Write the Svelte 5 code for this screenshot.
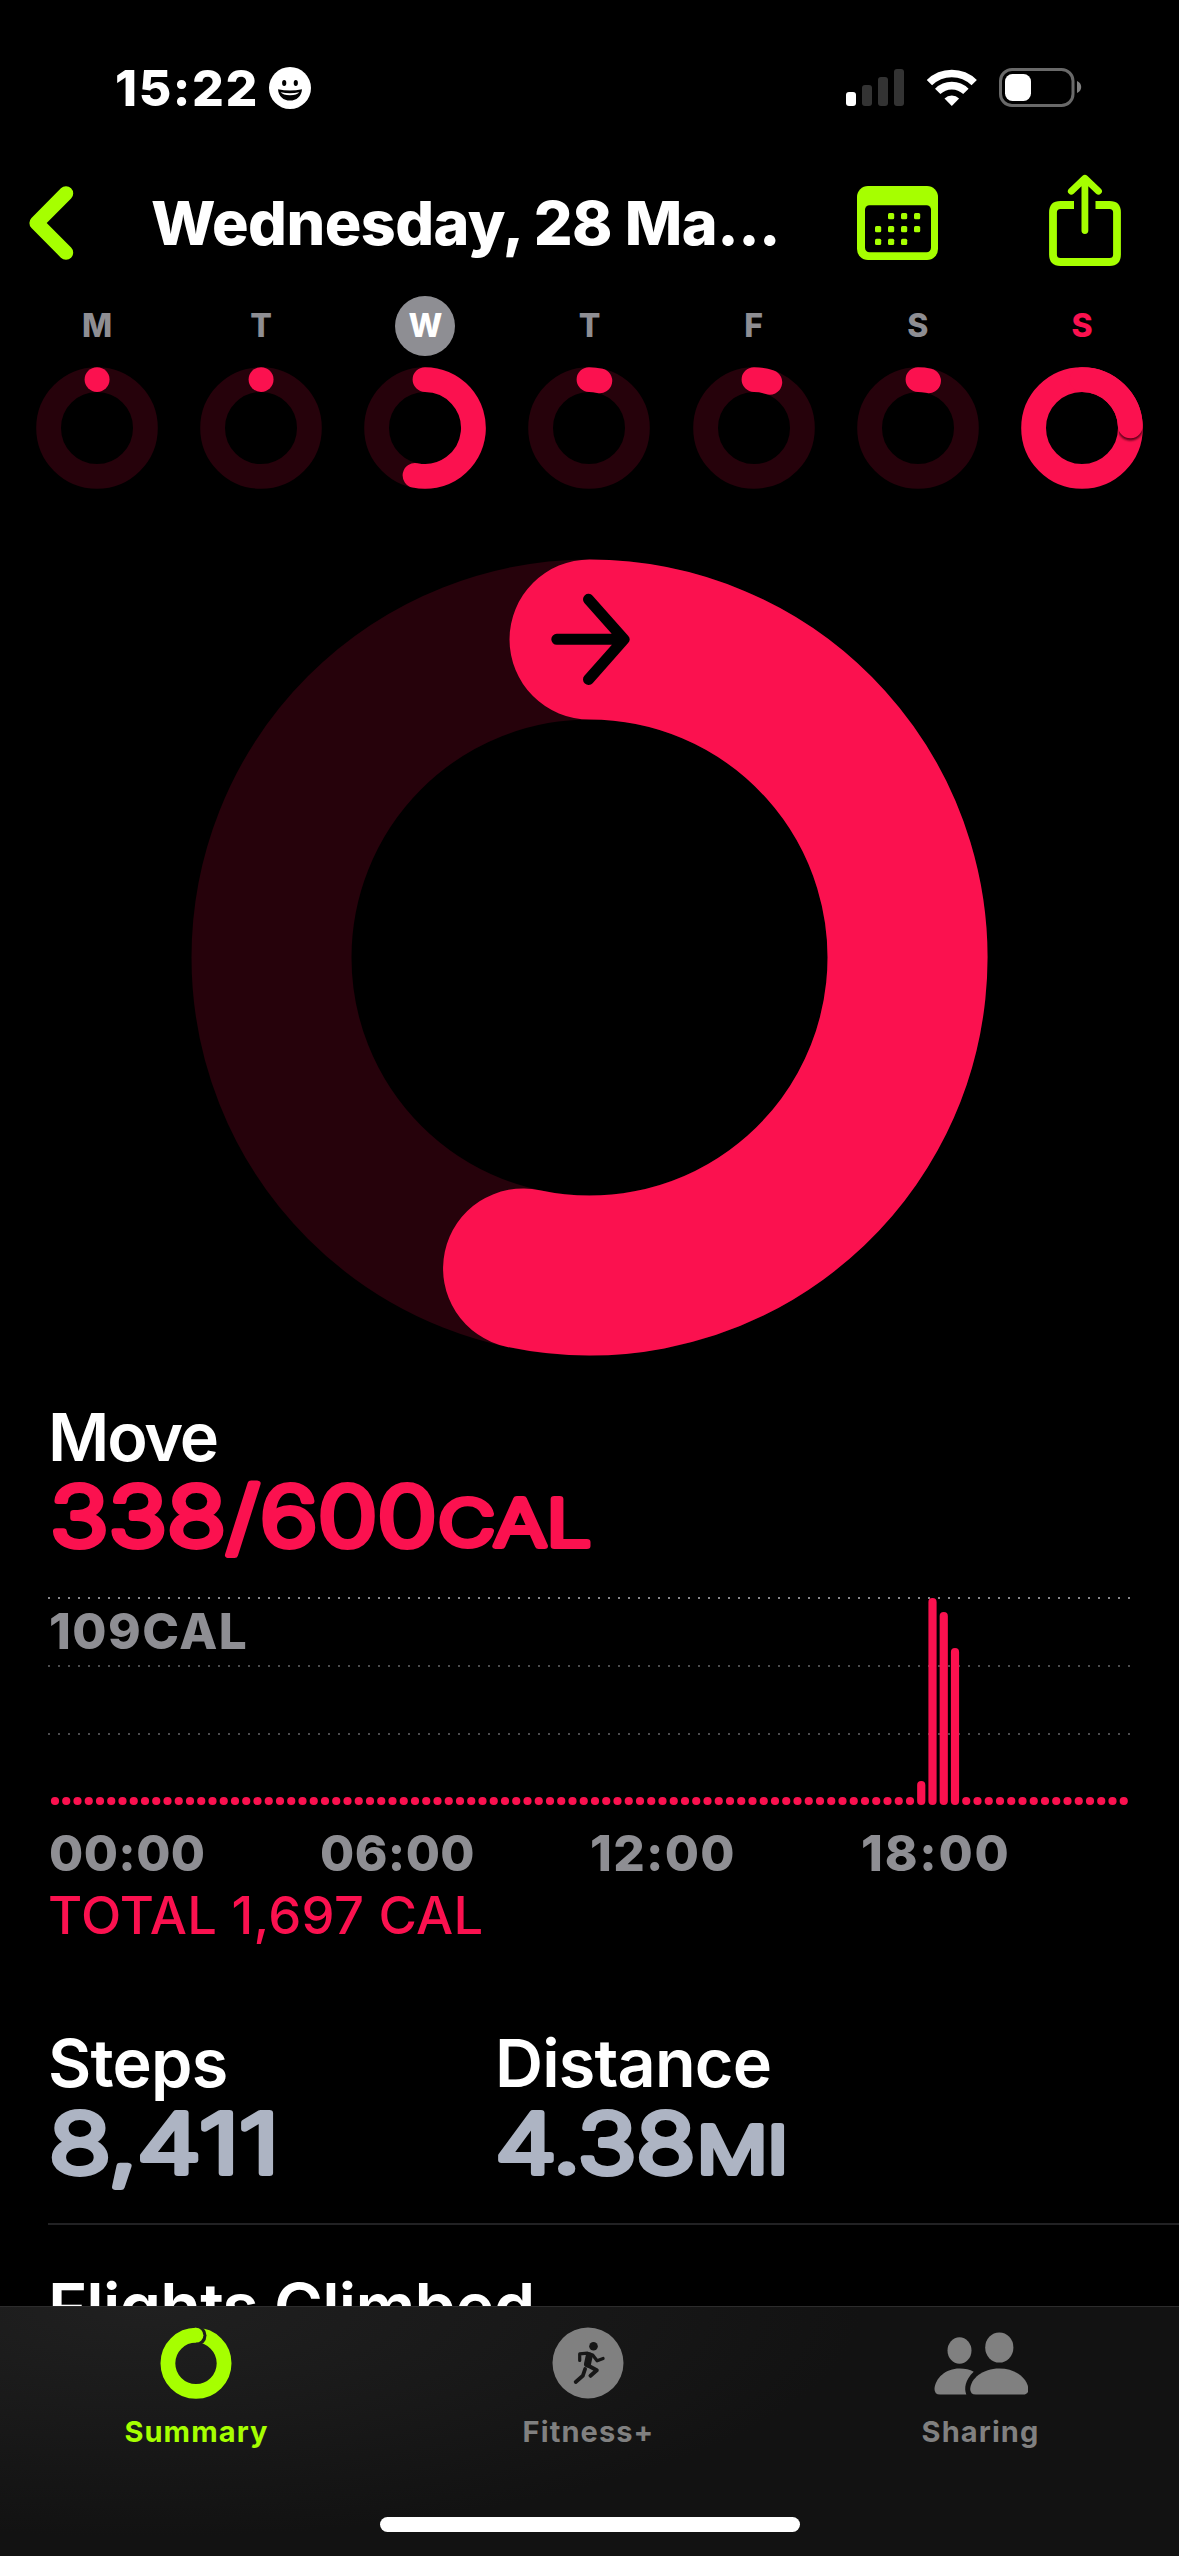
<script>
  const days = [
    { label: 'M', progress: 0.0005 },
    { label: 'T', progress: 0.0005 },
    { label: 'W', progress: 0.533, selected: true },
    { label: 'T', progress: 0.036 },
    { label: 'F', progress: 0.053 },
    { label: 'S', progress: 0.035 },
    { label: 'S', progress: 1.243, today: true }
  ];

  // One entry per quarter hour; the value is the top edge of its bar inside the plot.
  const peaks = { 77: 184, 78: 1, 79: 15, 80: 51 };
  const bars = Array.from({ length: 96 }, (_, i) => {
    const top = peaks[i] ?? 200;
    return { x: 2.9 + i * 11.25, y: top, h: 208 - top };
  });
  const hours = ['00:00', '06:00', '12:00', '18:00'];

  function arc(cx, cy, r, progress) {
    const a = Math.min(progress % 1 || progress, 0.9999) * Math.PI * 2;
    const x = cx + r * Math.sin(a);
    const y = cy - r * Math.cos(a);
    return `M${cx} ${cy - r}A${r} ${r} 0 ${a > Math.PI ? 1 : 0} 1 ${x.toFixed(2)} ${y.toFixed(2)}`;
  }
</script>

<div class="screen">
  <main class="content">
    <div class="status">
      <span class="time">15:22</span>
      <svg class="face" viewBox="0 0 42 42" width="42" height="42">
        <circle cx="21" cy="21" r="21" fill="#fff" />
        <ellipse cx="15.2" cy="16" rx="2.1" ry="2.9" />
        <ellipse cx="26.8" cy="16" rx="2.1" ry="2.9" />
        <path d="M9 22.2Q21 25 33 22.2C32.6 29.3 27.5 33.6 21 33.6S9.400 29.300 9 22.200Z" />
        <path d="M11.700 25.200Q21 27.200 30.300 25.200Q28 28.200 21 28.200T11.700 25.200Z" fill="#fff" />
      </svg>
      <svg class="indicators" viewBox="846 66 236 44" width="236" height="44">
        <rect x="846" y="92" width="10" height="14" rx="3" fill="#fff" />
        <rect x="862" y="85" width="10" height="21" rx="3" fill="#333" />
        <rect x="878" y="77" width="10" height="29" rx="3" fill="#333" />
        <rect x="894" y="69" width="10" height="37" rx="3" fill="#333" />
        <g fill="none" stroke="#fff" stroke-width="7.600">
          <path d="M929.400 82.600A32 32 0 0 1 974.200 82.600" />
          <path d="M937.700 91.400A20 20 0 0 1 965.900 91.400" />
        </g>
        <path d="M951.800 106L944.500 98.600A10.400 10.400 0 0 1 959.100 98.600Z" fill="#fff" />
        <rect x="1000.500" y="69.500" width="72.500" height="36" rx="11.500" fill="none" stroke="#696969" stroke-width="3" />
        <rect x="1005" y="74" width="26" height="27" rx="7.500" fill="#fff" />
        <path d="M1077 81V93C1079.500 92 1081.200 89.800 1081.200 87S1079.500 82 1077 81Z" fill="#808080" />
      </svg>
    </div>

    <header class="nav">
      <svg class="back" viewBox="29 186 45 74" width="45" height="74">
        <path d="M66 193.400L36.600 223L66 252.600" fill="none" stroke="#a6ff00" stroke-width="14.400" stroke-linecap="round" stroke-linejoin="round" />
      </svg>
      <h1>Wednesday, 28 Ma...</h1>
      <svg class="calendar" viewBox="857 186 81 74" width="81" height="74">
        <rect x="857" y="186" width="81" height="74" rx="11" fill="#a6ff00" />
        <rect x="865" y="205.300" width="66" height="47" rx="4.500" fill="#000" />
        <g fill="#a6ff00">
          {#each [[891, 216], [904, 216], [917, 216], [878, 229], [891, 229], [904, 229], [917, 229], [878, 241.700], [891, 241.700], [904, 241.700]] as [x, y]}
            <rect x={x - 3} y={y - 3} width="6.200" height="6.200" rx="1.500" />
          {/each}
        </g>
      </svg>
      <svg class="share" viewBox="1048 174 74 94" width="74" height="94">
        <g fill="none" stroke="#a6ff00">
          <path d="M1074 205H1060.500Q1053 205 1053 212.500V254.500Q1053 262 1060.500 262H1109.500Q1117 262 1117 254.500V212.500Q1117 205 1109.500 205H1095.500" stroke-width="7.800" />
          <path d="M1084.900 179V230.500M1071.300 191.200L1084.900 178.300L1098.500 191.200" stroke-width="6.800" stroke-linecap="round" stroke-linejoin="round" />
        </g>
      </svg>
    </header>

    <section class="week">
      {#each days as day}
        <div class="day">
          <span class="letter" class:selected={day.selected} class:today={day.today}>{day.label}</span>
          <svg viewBox="0 0 122 122" width="122" height="122" fill="none" stroke-width="24.800">
            <circle cx="61" cy="61" r="48.400" stroke={day.progress >= 1 ? '#fb114f' : '#26020b'} />
            {#if day.progress >= 1}
              <defs>
                <filter id="tip" x="-50%" y="-50%" width="200%" height="200%"><feGaussianBlur stdDeviation="1.200" /></filter>
                <clipPath id="band"><path d="M97.600 58H121.500V90H97.600Z" /></clipPath>
              </defs>
              <g clip-path="url(#band)"><circle cx="109.400" cy="60.800" r="12.800" fill="#5c0019" filter="url(#tip)" /></g>
            {/if}
            <path d={arc(61, 61, 48.400, day.progress)} stroke="#fb114f" stroke-linecap="round" />
          </svg>
        </div>
      {/each}
    </section>

    <svg class="move-ring" viewBox="0.500 -0.500 796 796" width="796" height="796" fill="none" stroke-width="160">
      <circle cx="398" cy="398" r="318" stroke="#26020b" />
      <path d={arc(398, 398, 318, 0.5335)} stroke="#fb114f" stroke-linecap="round" />
      <path d="M365.300 79.800H431M397 39.800L432.500 79.800L397 120" stroke="#000" stroke-width="11" stroke-linecap="round" stroke-linejoin="round" />
    </svg>

    <section class="move">
      <h2 class="move-title">Move</h2>
      <svg class="figure pink" viewBox="48 0 600 121" width="600" height="121">
        <text class="big" x="50" y="70" textLength="387" lengthAdjust="spacingAndGlyphs">338/600</text>
        <text class="unit" x="438" y="70" textLength="153" lengthAdjust="spacingAndGlyphs">CAL</text>
      </svg>

      <div class="chart">
        <svg viewBox="0 0 1083 208" width="1083" height="208">
          <g stroke-width="2" stroke-dasharray="2 8">
            <path d="M0 1H1083" stroke="#87878b" />
            <path d="M0 69H1083" stroke="#4c4c4e" />
            <path d="M0 137H1083" stroke="#4c4c4e" />
          </g>
          {#each bars as bar}
            <rect x={bar.x} y={bar.y} width="8.200" height={bar.h} rx="4.100" fill="#fb114f" />
          {/each}
        </svg>
        <span class="peak">109CAL</span>
      </div>
      <div class="axis">
        {#each hours as hour}<span>{hour}</span>{/each}
      </div>
      <p class="total">TOTAL 1,697 CAL</p>
    </section>

    <section class="metrics">
      <div class="metric">
        <h2 class="steps-title">Steps</h2>
        <svg class="figure grey" viewBox="48 0 400 121" width="400" height="121">
          <text class="big" x="49" y="71" textLength="230" lengthAdjust="spacingAndGlyphs">8,411</text>
        </svg>
      </div>
      <div class="metric">
        <h2 class="distance-title">Distance</h2>
        <svg class="figure grey" viewBox="495 0 400 121" width="400" height="121">
          <text class="big" x="495.500" y="71" textLength="200" lengthAdjust="spacingAndGlyphs">4.38</text>
          <text class="unit" x="697" y="71" textLength="91" lengthAdjust="spacingAndGlyphs">MI</text>
        </svg>
      </div>
    </section>
    <section class="flights">
      <h2 class="flights-title">Flights Climbed</h2>
    </section>
  </main>

  <footer class="tabs">
    <nav>
      <div class="tab active">
        <svg viewBox="159.500 2327 73 73" width="73" height="73">
          <defs>
            <mask id="gap" maskUnits="userSpaceOnUse" x="159" y="2327" width="74" height="73">
              <rect x="159" y="2327" width="74" height="73" fill="#fff" />
              <path d="M195.500 2325A10.500 10.500 0 0 1 195.500 2346Z" fill="#000" />
            </mask>
          </defs>
          <circle cx="195.500" cy="2363.300" r="28.100" fill="none" stroke="#a6ff00" stroke-width="14.800" mask="url(#gap)" />
          <circle cx="195.500" cy="2335.200" r="7.400" fill="#a6ff00" />
        </svg>
        <span>Summary</span>
      </div>
      <div class="tab">
        <svg viewBox="551.500 2326.500 73 73" width="73" height="73">
          <circle cx="587.500" cy="2362.500" r="35.500" fill="#808080" />
          <circle cx="593" cy="2345.700" r="4.300" fill="#171717" />
          <g fill="none" stroke="#171717" stroke-linecap="round" stroke-linejoin="round">
            <path d="M579.200 2360V2353.400L587 2352.700L592.200 2354.600L596.600 2360.300L602.600 2358" stroke-width="3.200" />
            <path d="M588.700 2355.500L587 2363.500" stroke-width="7" />
            <path d="M587.500 2365L596.300 2369.800L590 2375.300" stroke-width="4" />
            <path d="M584.600 2368.500L582.300 2375.300L575.200 2381.500" stroke-width="3.800" />
          </g>
        </svg>
        <span>Fitness+</span>
      </div>
      <div class="tab">
        <svg viewBox="932.500 2326.500 96 73" width="96" height="73" fill="#808080">
          <ellipse cx="960" cy="2350" rx="12" ry="13.200" />
          <ellipse cx="999.800" cy="2347" rx="14.100" ry="15.100" />
          <path d="M976.300 2394H1023.500Q1029 2394 1028.900 2388.500C1028.300 2378 1016.500 2368 999.800 2368S971.300 2378 970.700 2388.500Q970.700 2394 976.300 2394Z" />
          <path d="M940.500 2394H966.800C964.500 2388 965.500 2379.500 974.200 2371.300Q968.500 2368 960 2368C946 2368 936 2377.500 935 2388.500Q935 2394 940.500 2394Z" />
        </svg>
        <span>Sharing</span>
      </div>
    </nav>
    <div class="home"></div>
  </footer>
</div>

<style>
  :global(body) { margin: 0; background: #000; }
  .screen {
    width: 1179px;
    height: 2556px;
    display: flex;
    flex-direction: column;
    background: #000;
    color: #fff;
    font-family: Inter, "Liberation Sans", sans-serif;
    overflow: hidden;
  }
  svg { display: block; flex: none; }
  h1, h2, p { margin: 0; white-space: nowrap; }
  .content { height: 2306px; overflow: hidden; flex: none; }

  .status { height: 176px; display: flex; align-items: center; padding: 0 97px 0 115px; box-sizing: border-box; }
  .time { width: 154px; font-size: 50px; font-weight: 800; letter-spacing: 1.600px; line-height: 60px; }
  .indicators { margin-left: auto; }

  .nav { height: 94px; display: flex; align-items: center; padding: 0 57px 0 29px; box-sizing: border-box; }
  .nav h1 { width: 707px; margin-left: 77px; font-size: 61px; font-weight: 800; letter-spacing: -0.550px; line-height: 80px; }
  .nav .calendar { margin-left: -1px; }
  .nav .share { margin: -4px 0 0 auto; }

  .week { display: flex; justify-content: space-between; padding: 26px 36px 0; }
  .day { display: flex; flex-direction: column; align-items: center; gap: 11px; }
  .letter { width: 60px; height: 60px; border-radius: 50%; text-align: center; line-height: 60px; font-size: 32px; font-weight: 800; color: #8e8e93; }
  .letter.selected { background: #8e8e93; color: #fff; }
  .letter.today { color: #fb114f; }

  .move-ring { margin: 70px auto 0; overflow: visible; }

  .move { padding: 44px 48px 0; }
  h2 { font-size: 66.500px; font-weight: 560; line-height: 77px; height: 77px; letter-spacing: -0.800px; }
  .move-title { letter-spacing: -2.200px; }
  .figure { overflow: visible; font-weight: 300; stroke-width: 6; stroke-linejoin: round; stroke-linecap: round; }
  .figure.pink { fill: #fb114f; stroke: #fb114f; }
  .figure.grey { fill: #adb4c3; stroke: #adb4c3; }
  .big { font-size: 82px; }
  .unit { font-size: 65px; }

  .chart { display: grid; height: 208px; }
  .chart > * { grid-area: 1 / 1; }
  .peak { margin: 9px 0 0 1px; line-height: 50px; height: 50px; font-size: 49.500px; font-weight: 800; letter-spacing: 1.500px; color: #8e8e93; }
  .axis { display: grid; grid-template-columns: repeat(4, 271px); margin-top: 18px; line-height: 60px; font-size: 49.500px; font-weight: 800; letter-spacing: 0.400px; color: #8e8e93; }
  .axis span { padding-left: 1px; }
  .axis span:nth-child(3) { letter-spacing: 1.300px; padding-left: 0; }
  .axis span:nth-child(4) { letter-spacing: 1.800px; padding-left: 0; }
  .total { margin-top: 2px; line-height: 60px; font-size: 52.500px; font-weight: 500; letter-spacing: 0.250px; color: #fb114f; }

  .metrics { display: grid; grid-template-columns: 447px 1fr; margin: 80px 0 0 48px; border-bottom: 2px solid #222224; }
  .flights { padding: 44px 48px 0; }

  .tabs {
    height: 250px;
    box-sizing: border-box;
    border-top: 1px solid #2c2c2c;
    background: radial-gradient(ellipse 720px 230px at 12% 0, #202020, #121212);
    display: flex;
    flex-direction: column;
    align-items: center;
  }
  nav { width: 1176px; height: 210px; margin-right: 3px; display: grid; grid-template-columns: repeat(3, 1fr); }
  .tab { padding-top: 20px; display: flex; flex-direction: column; align-items: center; color: #808080; font-size: 29px; font-weight: 650; letter-spacing: 1.100px; line-height: 36px; }
  .tab span { margin: 14px 0 0 1px; }
  .tab.active { color: #a6ff00; }
  .home { width: 420px; height: 15px; border-radius: 8px; background: #fff; }
</style>
